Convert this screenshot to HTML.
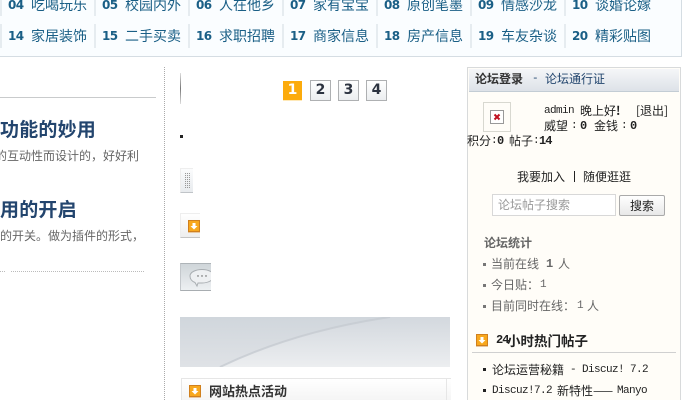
<!DOCTYPE html>
<html><head><meta charset="utf-8">
<style>
html,body{margin:0;padding:0;background:#fff;width:688px;height:400px;overflow:hidden}
body{position:relative;font-family:"WenQuanYi Zen Hei","Noto Sans CJK SC",sans-serif;font-size:12px;color:#333}
div,span.a{position:absolute;white-space:nowrap}
.cn{font-family:"WenQuanYi Zen Hei","Noto Sans CJK SC",sans-serif}
.n{position:absolute;font:bold 12px/20px "DejaVu Sans",sans-serif;letter-spacing:-.6px;color:#1a5f86}
.t{position:absolute;font:14px/20px "WenQuanYi Zen Hei","Noto Sans CJK SC",sans-serif;color:#1a5f86}
.sep{width:2px;background:#e6ecf0}
.pg{width:19px;height:19px;border:1px solid #aeb0b2;background:linear-gradient(#fff,#eceef0);font:bold 14px/19px "DejaVu Sans",sans-serif;color:#2c3340;text-align:center;box-sizing:content-box}
.l{font:12px/16px "WenQuanYi Zen Hei","Noto Sans CJK SC",sans-serif;color:#222}
.m{font:11px/16px "Liberation Mono",monospace;letter-spacing:-.6px;color:#222}
.b{font:bold 12px/16px "Liberation Mono",monospace;letter-spacing:-1px;color:#222}
.dot{width:3px;height:3px;background:#777}
.g{color:#666}
svg{display:block}
</style></head><body>
<div style="left:0;top:0;width:681px;height:56px;background:#fafdff;border-right:1px solid #d5dde3;border-bottom:1px solid #d5dde3"></div>

<div class="sep" style="left:0;top:0;height:16px"></div><div class="sep" style="left:94px;top:0;height:16px"></div><div class="sep" style="left:188px;top:0;height:16px"></div><div class="sep" style="left:282px;top:0;height:16px"></div><div class="sep" style="left:376px;top:0;height:16px"></div><div class="sep" style="left:470px;top:0;height:16px"></div><div class="sep" style="left:564px;top:0;height:16px"></div>
<div class="sep" style="left:0;top:24px;height:24px"></div><div class="sep" style="left:94px;top:24px;height:24px"></div><div class="sep" style="left:188px;top:24px;height:24px"></div><div class="sep" style="left:282px;top:24px;height:24px"></div><div class="sep" style="left:376px;top:24px;height:24px"></div><div class="sep" style="left:470px;top:24px;height:24px"></div><div class="sep" style="left:564px;top:24px;height:24px"></div>

<span class="n" style="left:8px;top:-5px">04</span><span class="t" style="left:31px;top:-5px">吃喝玩乐</span>
<span class="n" style="left:102px;top:-5px">05</span><span class="t" style="left:125px;top:-5px">校园内外</span>
<span class="n" style="left:196px;top:-5px">06</span><span class="t" style="left:219px;top:-5px">人在他乡</span>
<span class="n" style="left:290px;top:-5px">07</span><span class="t" style="left:313px;top:-5px">家有宝宝</span>
<span class="n" style="left:384px;top:-5px">08</span><span class="t" style="left:407px;top:-5px">原创笔墨</span>
<span class="n" style="left:478px;top:-5px">09</span><span class="t" style="left:501px;top:-5px">情感沙龙</span>
<span class="n" style="left:572px;top:-5px">10</span><span class="t" style="left:595px;top:-5px">谈婚论嫁</span>

<span class="n" style="left:8px;top:26px">14</span><span class="t" style="left:31px;top:26px">家居装饰</span>
<span class="n" style="left:102px;top:26px">15</span><span class="t" style="left:125px;top:26px">二手买卖</span>
<span class="n" style="left:196px;top:26px">16</span><span class="t" style="left:219px;top:26px">求职招聘</span>
<span class="n" style="left:290px;top:26px">17</span><span class="t" style="left:313px;top:26px">商家信息</span>
<span class="n" style="left:384px;top:26px">18</span><span class="t" style="left:407px;top:26px">房产信息</span>
<span class="n" style="left:478px;top:26px">19</span><span class="t" style="left:501px;top:26px">车友杂谈</span>
<span class="n" style="left:572px;top:26px">20</span><span class="t" style="left:595px;top:26px">精彩贴图</span>

<!-- left column -->
<div style="left:0;top:97px;width:156px;height:1px;background:#c9cbcc"></div>
<div class="cn" style="left:0;top:117px;font-size:19px;line-height:24px;font-weight:bold;color:#23456e;letter-spacing:.2px">功能的妙用</div>
<div class="cn" style="left:-5px;top:148px;font-size:12px;line-height:16px;color:#666">的互动性而设计的，好好利</div>
<div class="cn" style="left:0;top:197px;font-size:19px;line-height:24px;font-weight:bold;color:#23456e;letter-spacing:.2px">用的开启</div>
<div class="cn" style="left:0;top:228px;font-size:12px;line-height:16px;color:#666">的开关。做为插件的形式，</div>
<div style="left:0;top:271px;width:5px;height:0;border-top:1px dotted #bbb"></div>
<div style="left:11px;top:271px;width:133px;height:0;border-top:1px dotted #bbb"></div>
<div style="left:164px;top:67px;width:0;height:333px;border-left:1px dotted #aaa"></div>

<!-- middle fragments -->
<div style="left:180px;top:73px;width:1px;height:31px;background:linear-gradient(#ddd,#777 50%,#ddd)"></div>
<div style="left:180px;top:135px;width:3px;height:3px;background:#222"></div>

<div style="left:180px;top:168px;width:13px;height:25px;background:linear-gradient(#fbfcfd,#e8ebee);border-top:1px solid #eee;border-left:1px solid #eee;border-bottom:1px solid #c0c4c8;box-sizing:border-box"></div>
<div style="left:185px;top:173px;width:5px;height:15px;background-image:radial-gradient(circle at .5px .5px,#999 .7px,transparent .8px);background-size:2px 2px"></div>

<div style="left:180px;top:213px;width:20px;height:25px;background:linear-gradient(#fff,#eee);border-top:1px solid #eee;border-left:1px solid #eee;border-bottom:1px solid #c4c4c4;box-sizing:border-box"></div>
<div style="left:188px;top:220px;width:12px;height:13px"><svg width="12" height="13"><rect x=".5" y=".5" width="11" height="11" fill="#f8a81e" stroke="#d0801e"/><rect y="12" width="12" height="1" fill="#e7c7a0"/><path d="M4.500 3h3v3h2L6 9.500 2.500 6h2z" fill="#fff"/></svg></div>

<div style="left:180px;top:263px;width:31px;height:28px;background:linear-gradient(#cfd5d9,#edf0f2);border-top:1px solid #aeb4b8;border-left:1px solid #c4c8cc;border-bottom:1px solid #a8adb1;box-sizing:border-box;overflow:hidden">
<svg width="31" height="27"><path d="M12 12C12 8 18 5.500 24 5.500C30 5.500 36 8 36 12C36 16 30 19 24 19L20 19L19 22L17 18.500C14 17.500 12 15 12 12Z" fill="#eef0f2" stroke="#a9aeb2" transform="translate(-3,0)"/><circle cx="17" cy="12" r=".7" fill="#555"/><circle cx="21" cy="12" r=".7" fill="#555"/><circle cx="25" cy="12" r=".7" fill="#555"/></svg></div>

<div style="left:180px;top:317px;width:270px;height:50px;overflow:hidden;background:linear-gradient(#d0d6dc,#dfe2e6)">
<svg width="270" height="50"><defs><linearGradient id="c" x1="0" y1="0" x2="0" y2="1"><stop offset="0" stop-color="#d3d8de"/><stop offset="1" stop-color="#eceef0"/></linearGradient></defs><path d="M40 50Q115 14 210 0L270 0L270 50Z" fill="url(#c)"/><path d="M40 50Q115 14 210 0" fill="none" stroke="#c6cbd1" stroke-width="2" opacity=".8"/></svg></div>
<div style="left:181px;top:378px;width:270px;height:22px;border:1px solid #e6e6e6;border-bottom:0;border-right:0;box-sizing:border-box;background:linear-gradient(#fff,#f5f5f5)"></div>
<div style="left:446px;top:379px;width:1px;height:21px;background:#e6e6e6"></div>
<div style="left:189px;top:385px;width:12px;height:13px"><svg width="12" height="13"><rect x=".5" y=".5" width="11" height="11" fill="#f8a81e" stroke="#d0801e"/><rect y="12" width="12" height="1" fill="#e7c7a0"/><path d="M4.500 3h3v3h2L6 9.500 2.500 6h2z" fill="#fff"/></svg></div>
<div class="cn" style="left:209px;top:383px;font-size:13px;line-height:16px;font-weight:bold;color:#333">网站热点活动</div>

<!-- pager -->
<div style="left:283px;top:81px;width:19px;height:19px;background:#fcab0c;border-bottom:1px solid #ffe9b8;color:#fff;font:bold 14px/19px 'DejaVu Sans',sans-serif;text-align:center">1</div>
<div class="pg" style="left:310px;top:80px">2</div>
<div class="pg" style="left:338px;top:80px">3</div>
<div class="pg" style="left:366px;top:80px">4</div>

<!-- right panel -->
<div style="left:467px;top:67px;width:214px;height:333px;background:#fffdf8;border:1px solid #d8dadb;border-bottom:0;box-sizing:border-box"></div>
<div style="left:469px;top:69px;width:210px;height:23px;background:linear-gradient(#f5f6f8,#dde2e8);border-bottom:1px solid #c3ccd4;box-sizing:border-box"></div>
<div class="l" style="left:475px;top:71px;font-weight:bold;color:#333">论坛登录</div>
<div class="m" style="left:532px;top:71px;color:#23466e">-</div>
<div class="l" style="left:545px;top:71px;color:#23466e">论坛通行证</div>

<div style="left:483px;top:102px;width:28px;height:30px;background:#fffdf8;border:1px solid #d8d8d0;box-sizing:border-box"></div>
<div style="left:490px;top:110px;width:14px;height:14px;background:#fff;border:1px solid #999;box-sizing:border-box"><svg width="12" height="12"><path d="M3.500 3.500l5 5M8.500 3.500l-5 5" stroke="#c01020" stroke-width="2"/></svg></div>
<div class="m" style="left:544px;top:103px">admin</div>
<div class="l" style="left:580px;top:103px">晚上好<b>!</b></div>
<div class="l" style="left:636px;top:103px">[退出]</div>
<div class="l" style="left:544px;top:118px">威望</div><div class="m" style="left:571px;top:118px">:</div><div class="b" style="left:580px;top:118px">0</div>
<div class="l" style="left:594px;top:118px">金钱</div><div class="m" style="left:621px;top:118px">:</div><div class="b" style="left:630px;top:118px">0</div>
<div class="l" style="left:467px;top:133px">积分</div><div class="m" style="left:491px;top:133px">:</div><div class="b" style="left:497px;top:133px">0</div>
<div class="l" style="left:509px;top:133px">帖子</div><div class="m" style="left:533px;top:133px">:</div><div class="b" style="left:539px;top:133px">14</div>
<div class="l" style="left:517px;top:169px">我要加入</div><div style="left:574px;top:171px;width:1px;height:11px;background:#222"></div><div class="l" style="left:583px;top:169px">随便逛逛</div>

<div style="left:492px;top:194px;width:124px;height:22px;background:#fff;border:1px solid #d8d8d8;box-sizing:border-box"></div>
<div class="l" style="left:498px;top:197px;color:#999">论坛帖子搜索</div>
<div class="l" style="left:619px;top:195px;width:46px;height:21px;background:linear-gradient(#fff,#e8e8e8);border:1px solid #aaa;border-radius:2px;box-sizing:border-box;text-align:center;line-height:19px">搜索</div>

<div class="l g" style="left:484px;top:235px;font-weight:bold">论坛统计</div>
<div class="dot" style="left:483px;top:263px"></div><div class="l g" style="left:491px;top:256px">当前在线</div><div class="b" style="left:546px;top:256px;color:#666">1</div><div class="l g" style="left:558px;top:256px">人</div>
<div class="dot" style="left:483px;top:284px"></div><div class="l g" style="left:491px;top:277px">今日贴：</div><div class="m" style="left:540px;top:277px;color:#666">1</div>
<div class="dot" style="left:483px;top:305px"></div><div class="l g" style="left:491px;top:298px">目前同时在线：</div><div class="m" style="left:577px;top:298px;color:#666">1</div><div class="l g" style="left:587px;top:298px">人</div>

<div style="left:476px;top:334px;width:12px;height:13px"><svg width="12" height="13"><rect x=".5" y=".5" width="11" height="11" fill="#f8a81e" stroke="#d0801e"/><rect y="12" width="12" height="1" fill="#e7c7a0"/><path d="M4.500 3h3v3h2L6 9.500 2.500 6h2z" fill="#fff"/></svg></div>
<div class="b" style="left:496px;top:332px">24</div>
<div class="l" style="left:507px;top:332px;font-weight:bold;font-size:13.500px">小时热门帖子</div>
<div style="left:472px;top:352px;width:204px;height:1px;background:#d0d0d0"></div>
<div class="dot" style="left:483px;top:368px;background:#222"></div><div class="l" style="left:492px;top:362px">论坛运营秘籍</div><div class="m" style="left:570px;top:362px">- Discuz! 7.2</div>
<div class="dot" style="left:483px;top:389px;background:#222"></div><div class="m" style="left:492px;top:383px">Discuz!7.2</div><div class="l" style="left:557px;top:383px">新特性——</div><div class="m" style="left:617px;top:383px">Manyo</div>
</body></html>
